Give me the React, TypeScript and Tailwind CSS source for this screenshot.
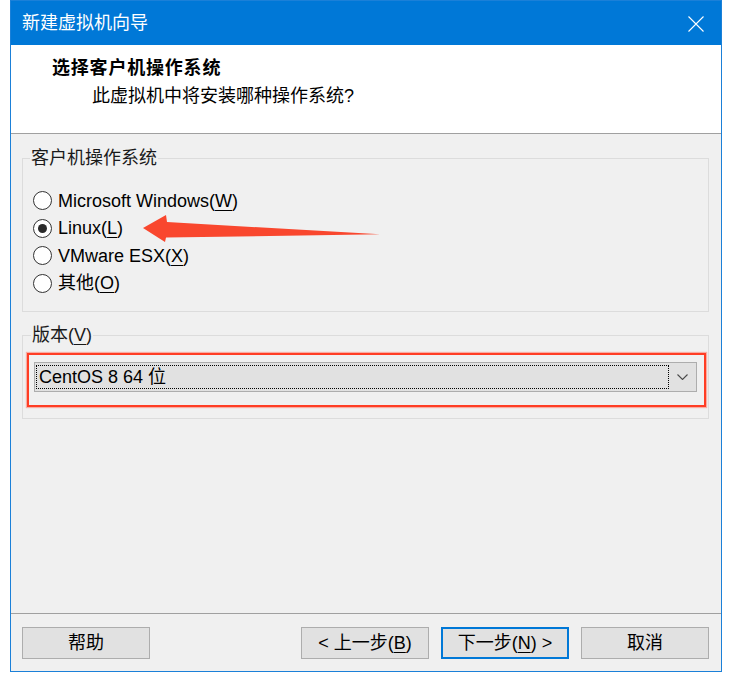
import React from "react";

const FONT = "font-['Liberation_Sans','Noto_Sans_CJK_SC',sans-serif]";

function Radio({ checked, children }: { checked?: boolean; children: React.ReactNode }) {
  return (
    <div className="flex h-[27.5px] items-center">
      <div className="flex h-[19px] w-[19px] items-center justify-center rounded-full border border-[#333333] bg-white">
        {checked && <div className="h-[9px] w-[9px] rounded-full bg-[#2a2a2a]" />}
      </div>
      <span className="ml-[6px] text-[18px] leading-[22px] text-black">{children}</span>
    </div>
  );
}

function Btn({ children, focused }: { children: React.ReactNode; focused?: boolean }) {
  return (
    <div
      className={
        focused
          ? "flex h-[32px] w-[128px] items-center justify-center border-2 border-[#0078d7] bg-[#e1e1e1] text-[18px] leading-[22px] text-black"
          : "flex h-[32px] w-[128px] items-center justify-center border border-[#adadad] bg-[#e1e1e1] text-[18px] leading-[22px] text-black"
      }
    >
      {children}
    </div>
  );
}

function U({ children }: { children: React.ReactNode }) {
  return <span className="underline decoration-1 underline-offset-[3px]">{children}</span>;
}

export default function App() {
  return (
    <div className={`relative h-[683px] w-[732px] overflow-hidden bg-white ${FONT}`}>
      <div className="ml-[10px] flex h-[672px] w-[712px] flex-col border border-[#1b80d8] bg-[#f0f0f0]">
        {/* Title bar */}
        <div className="flex h-[44px] items-center justify-between bg-[#0078d7] pl-[11px] pr-[17px]">
          <span className="text-[18px] leading-[22px] text-white">新建虚拟机向导</span>
          <svg width="16" height="16" viewBox="0 0 16 16" className="mt-[1px]">
            <path d="M0.5 0.5 L15.5 15.5 M15.5 0.5 L0.5 15.5" stroke="white" strokeWidth="1.1" fill="none" />
          </svg>
        </div>
        {/* Header */}
        <div className="h-[88px] bg-white pt-[12px]">
          <div className="pl-[41px] text-[18px] font-bold leading-[22px] tracking-[0.8px] text-black">选择客户机操作系统</div>
          <div className="mt-[6px] pl-[81px] text-[18px] leading-[22px] text-black">此虚拟机中将安装哪种操作系统?</div>
        </div>
        <div className="h-px bg-[#a0a0a0]" />
        {/* Body */}
        <div className="flex flex-1 flex-col">
          <div className="relative ml-[11px] mt-[24px] h-[154px] w-[687px] border border-[#dcdcdc] pl-[10px] pt-[28px]">
            <span className="absolute -top-[12px] left-[7px] bg-[#f0f0f0] px-[1px] text-[18px] leading-[22px] text-[#1a1a1a]">
              客户机操作系统
            </span>
            <Radio>
              Microsoft Windows(<U>W</U>)
            </Radio>
            <Radio checked>
              Linux(<U>L</U>)
            </Radio>
            <Radio>
              VMware ESX(<U>X</U>)
            </Radio>
            <Radio>
              其他(<U>O</U>)
            </Radio>
          </div>

          <div className="relative ml-[11px] mt-[23px] h-[84px] w-[687px] border border-[#dcdcdc] pl-[4px] pt-[17px]">
            <span className="absolute -top-[12px] left-[8px] bg-[#f0f0f0] px-[1px] text-[18px] leading-[22px] text-[#1a1a1a]">
              版本(<U>V</U>)
            </span>
            <div className="h-[54px] w-[679px] border-2 border-[#ff3d24] pl-[5px] pr-[7px] pt-[7px] shadow-[0_0_1px_1px_rgba(255,90,70,0.45)]">
              <div className="flex h-[30px] w-[663px] items-stretch border border-[#adadad] bg-[#e1e1e1] py-[2px] pl-[1px]">
                <div className="flex w-[633px] items-center border border-dotted border-black pl-[2px] text-[18px] leading-[22px] text-black">
                  CentOS 8 64 位
                </div>
                <div className="flex flex-1 items-center justify-center">
                  <svg width="11" height="6" viewBox="0 0 11 6">
                    <path d="M0.5 0.5 L5.5 5.5 L10.5 0.5" stroke="#4a4a4a" strokeWidth="1.1" fill="none" />
                  </svg>
                </div>
              </div>
            </div>
          </div>

          <div className="flex-1" />
          <div className="h-px bg-[#a0a0a0]" />
          <div className="flex h-[57px] items-start pl-[11px] pr-[12px] pt-[13px]">
            <Btn>帮助</Btn>
            <div className="flex-1" />
            <div className="flex gap-[12px]">
              <Btn>
                &lt; 上一步(<U>B</U>)
              </Btn>
              <Btn focused>
                下一步(<U>N</U>) &gt;
              </Btn>
              <Btn>取消</Btn>
            </div>
          </div>
        </div>
      </div>

      {/* annotation arrow */}
      <svg className="pointer-events-none absolute left-0 top-0" width="732" height="683" viewBox="0 0 732 683">
        <polygon points="143,228 166,215 167,222 380,234.3 166,237.5 165,242" fill="#f9472e" />
      </svg>
    </div>
  );
}
